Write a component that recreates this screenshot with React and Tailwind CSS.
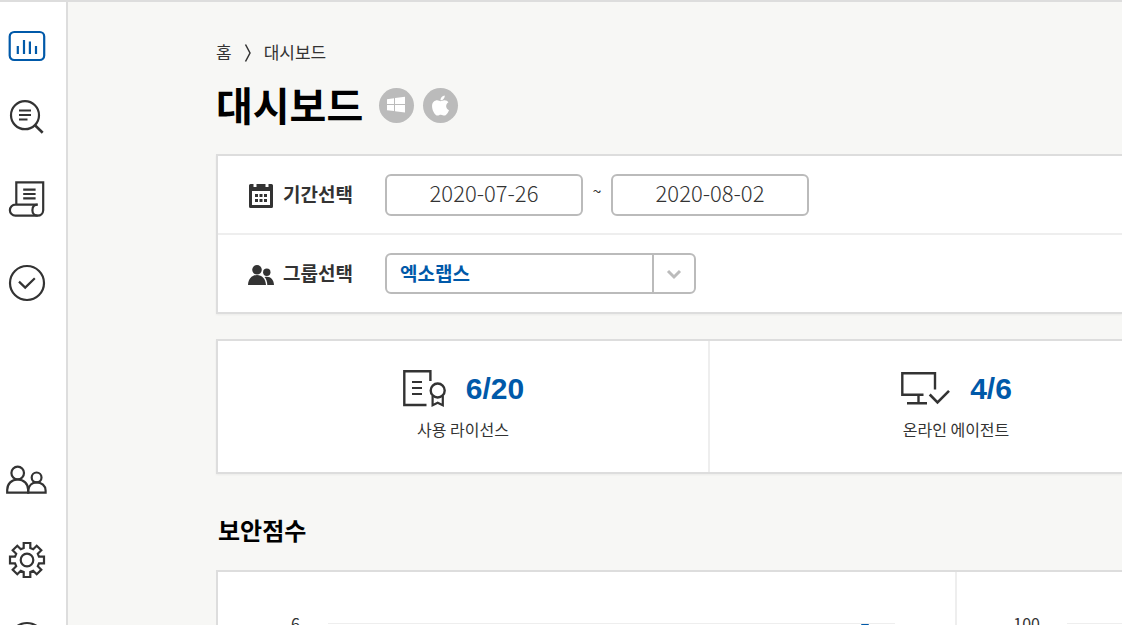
import { FaApple } from "react-icons/fa";

const ChartIcon = () => (
  <svg width="40" height="40" fill="none" stroke="#0059a9" strokeWidth="2.2">
    <rect x="2.7" y="6" width="34.5" height="28" rx="4.5" />
    <path d="M10.8 20v8M17 14v14M22.9 15.5V28M29 20v8" />
  </svg>
);

const SearchIcon = () => (
  <svg width="40" height="40" fill="none" stroke="#333" strokeWidth="2.2">
    <circle cx="18" cy="17.2" r="14" />
    <path d="M12 12.5h12M12 17h12M12 21.5h8.5" />
    <path d="M28 27.3l7.7 7.4" strokeWidth="2.6" />
  </svg>
);

const ReportIcon = () => (
  <svg width="40" height="40" fill="none" stroke="#333" strokeWidth="2.2">
    <path d="M9.3 26.5V4.3h26.9v28a5.6 5.6 0 0 1-5.6 5.4H8.4a5.4 5.4 0 0 1 0-11h22.2" />
    <path d="M30.6 26.7c-3.6 0-5.2 2.6-5.2 5.5s2 5.5 5.2 5.5" />
    <path d="M16.2 11.7h12.4M16.2 16h12.4M16.2 20.3h12.4" />
  </svg>
);

const CheckIcon = () => (
  <svg width="40" height="40" fill="none" stroke="#333" strokeWidth="2.2">
    <circle cx="20" cy="21" r="17" />
    <path d="M12 19.6l6.2 6 9.6-9.4" />
  </svg>
);

const UsersIcon = () => (
  <svg width="42" height="40" fill="none" stroke="#333" strokeWidth="2.2">
    <circle cx="11.7" cy="13" r="6.3" />
    <circle cx="30.6" cy="17.4" r="4.9" />
    <path d="M1.2 32.6V30c0-6.3 4.5-10.5 10.5-10.5S22.2 23.700 22.200 30v2.600z" />
    <path d="M22.2 32.6V30c.6-4.500 4-7.700 8.400-7.700 5 0 9 3.500 9 8.100v2.200z" />
  </svg>
);

const GearIcon = () => (
  <svg width="40" height="40" viewBox="-20 -20 40 40" fill="none" stroke="#333" strokeWidth="2.2">
    <circle r="6.3" />
    <path d="M-3.3-12V-17H3.3V-12L6.2-10.8 9.7-14.3 14.3-9.7 10.8-6.2 12-3.3H17V3.3H12L10.8 6.2 14.3 9.7 9.7 14.3 6.2 10.8 3.3 12V17H-3.3V12L-6.2 10.8-9.7 14.3-14.3 9.7-10.8 6.2-12 3.3H-17V-3.3H-12L-10.8-6.2-14.3-9.7-9.7-14.3-6.2-10.8z" />
  </svg>
);

const HelpIcon = () => (
  <svg width="40" height="40" fill="none" stroke="#333" strokeWidth="2.2">
    <circle cx="20" cy="20" r="17" />
    <path d="M15 16a5 5 0 1 1 7 4.6q-2 1-2 3.400M20 27v2.5" />
  </svg>
);

const WindowsIcon = () => (
  <svg width="20" height="18" fill="#fff">
    <path d="M0 3.2l7-1v5.800H0zM8 2L18 .7v7.300H8zM0 9h7v6L0 14.200zM8 9h10v7.600L8 15.200z" />
  </svg>
);

const CalendarIcon = () => (
  <svg width="26" height="28" fill="#333">
    <path
      fillRule="evenodd"
      d="M1 4.500Q1 3 2.500 3H5.500v3h3V3H17.500v3h3V3H23.500Q25 3 25 4.500V25.500Q25 27 23.500 27H2.500Q1 27 1 25.500zM4 10v14h18V10z"
    />
    <path d="M7 13h3v3H7zM11.500 13h3v3h-3zM16 13h3v3h-3zM7 18h3v3H7zM11.500 18h3v3h-3zM16 18h3v3h-3z" />
  </svg>
);

const GroupIcon = () => (
  <svg width="26" height="24" fill="#333">
    <circle cx="9" cy="7.800" r="4.800" />
    <circle cx="18.800" cy="10.300" r="3.700" />
    <path d="M0 23c.4-6.300 4-10 9-10s8.600 3.700 9 10zM19.300 23c-.1-3.400-1-6-2.800-8 5.300-1.400 9.300 1.800 9.500 8z" />
  </svg>
);

const LicenseIcon = () => (
  <svg width="46" height="40" fill="none" stroke="#333" strokeWidth="2.4">
    <path d="M28.4 12V2.3H2.3V36H24.5" />
    <path d="M10 13h10M10 19h10M10 25h10" strokeWidth="2.2" />
    <circle cx="35.7" cy="21.5" r="7" />
    <path d="M30.6 27v9.300l5.100-2.600 5.100 2.600V27" strokeWidth="2.2" />
  </svg>
);

const AgentIcon = () => (
  <svg width="52" height="40" fill="none" stroke="#333" strokeWidth="2.4">
    <path d="M35 20.5V4.3H2.3V25.700H23.5M18.5 26v8M7 34.200h20" />
    <path d="M29.7 25.5l7.800 7.800L49 21.800" strokeWidth="2.6" />
  </svg>
);

const menu = [
  { label: "대시보드", icon: <ChartIcon />, className: "mt-6" },
  { label: "검색", icon: <SearchIcon />, className: "mt-8" },
  { label: "보고서", icon: <ReportIcon />, className: "mt-10" },
  { label: "점검", icon: <CheckIcon />, className: "mt-11" },
  { label: "사용자", icon: <UsersIcon />, className: "mt-[158px]" },
  { label: "설정", icon: <GearIcon />, className: "mt-10" },
  { label: "도움말", icon: <HelpIcon />, className: "mt-10" },
];

const Sidebar = () => (
  <nav className="flex w-[68px] shrink-0 flex-col border-r-2 border-[#ddd] bg-white pr-3">
    {menu.map((item) => (
      <a
        key={item.label}
        href="#"
        aria-label={item.label}
        className={`flex h-10 shrink-0 items-center justify-center ${item.className}`}
      >
        {item.icon}
      </a>
    ))}
  </nav>
);

const DateInput = ({ label, value }) => (
  <input
    type="text"
    aria-label={label}
    defaultValue={value}
    className="h-[42px] w-[198px] rounded-md border-2 border-[#bbb] bg-white pb-1.5 text-center text-[22px] font-light"
  />
);

const Stat = ({ icon, value, label, className }) => (
  <div className={`flex w-[492px] shrink-0 flex-col items-center pt-7 ${className}`}>
    <div className="flex items-center gap-[18px]">
      {icon}
      <strong className="font-['Liberation_Sans',sans-serif] text-[30px] leading-10 text-[#0059a9]">
        {value}
      </strong>
    </div>
    <span className="mt-2 text-base leading-6">{label}</span>
  </div>
);

const App = () => {
  return (
    <div className="flex h-screen overflow-hidden border-t-2 border-[#ddd] bg-[#f7f7f5] font-['Noto_Sans_CJK_KR',sans-serif] text-[#333]">
      <Sidebar />

      <main className="min-w-0 flex-1 overflow-hidden pl-[148px] pt-[38px]">
        {/* Breadcrumb */}
        <div className="flex items-center gap-2 text-[17px] leading-6">
          <a href="#">홈</a>
          <svg width="16" height="22" fill="none" stroke="#333" strokeWidth="1.5">
            <path d="M5.5 3.5l4.500 8.500-4.500 8.500" />
          </svg>
          <span>대시보드</span>
        </div>

        {/* Title */}
        <div className="mb-6 mt-4 flex items-center">
          <h1 className="pb-0.5 text-[40px] font-bold leading-[48px] text-black">대시보드</h1>
          <button aria-label="Windows" className="ml-4 flex size-[35px] items-center justify-center rounded-full bg-[#bbb]">
            <WindowsIcon />
          </button>
          <button aria-label="macOS" className="ml-[9px] flex size-[35px] items-center justify-center rounded-full bg-[#bbb]">
            <FaApple color="#fff" size={23} />
          </button>
        </div>

        {/* Filters */}
        <section className="border-y-2 border-l-2 border-[#ddd] bg-white shadow-xs">
          <div className="flex h-[79px] items-center border-b-2 border-[#eee] pl-[30px]">
            <div className="flex w-[137px] items-center gap-[9px]">
              <CalendarIcon />
              <span className="pb-0.5 text-[19px] font-bold leading-7">기간선택</span>
            </div>
            <DateInput label="시작일" value="2020-07-26" />
            <span className="w-7 pb-2.5 text-center text-base">~</span>
            <DateInput label="종료일" value="2020-08-02" />
          </div>
          <div className="flex h-[77px] items-center pl-[30px]">
            <label htmlFor="group" className="flex w-[137px] items-center gap-[9px]">
              <GroupIcon />
              <span className="pb-0.5 text-[19px] font-bold leading-7">그룹선택</span>
            </label>
            <div className="relative w-[311px]">
              <select
                id="group"
                className="block h-[41px] w-full appearance-none rounded-md border-2 border-[#bbb] bg-white pl-[13px] text-[19px] font-bold text-[#0059a9]"
              >
                <option>엑소랩스</option>
              </select>
              <span className="pointer-events-none absolute inset-y-0 right-0 flex w-11 items-center justify-center border-l-2 border-[#bbb] pr-0.5">
                <svg width="16" height="12" fill="none" stroke="#bbb" strokeWidth="3">
                  <path d="M2 3l6 6 6-6" />
                </svg>
              </span>
            </div>
          </div>
        </section>

        {/* Summary */}
        <section className="mt-[25px] flex h-[135px] overflow-hidden border-y-2 border-l-2 border-[#ddd] bg-white shadow-xs">
          <Stat icon={<LicenseIcon />} value="6/20" label="사용 라이선스" className="border-r-2 border-[#eee]" />
          <Stat icon={<AgentIcon />} value="4/6" label="온라인 에이전트" className="" />
        </section>

        {/* Security score */}
        <h2 className="mb-6 mt-10 pl-0.5 text-[24px] font-bold leading-8 text-black">보안점수</h2>
        <section className="flex overflow-hidden border-y-2 border-l-2 border-[#ddd] bg-white">
          <div className="w-[739px] shrink-0 border-r-2 border-[#eee]">
            <svg width="737" height="300">
              <path d="M110 51.5h567" stroke="#eee" />
              <text x="82" y="58" textAnchor="end" fontSize="16" fill="#333">6</text>
              <rect x="643" y="52" width="8" height="200" rx="1" fill="#0059a9" />
            </svg>
          </div>
          <svg width="500" height="300" className="shrink-0">
            <path d="M110 51.5h390" stroke="#eee" />
            <text x="83" y="58" textAnchor="end" fontSize="16" fill="#333">100</text>
          </svg>
        </section>
      </main>
    </div>
  );
};

export default App;
